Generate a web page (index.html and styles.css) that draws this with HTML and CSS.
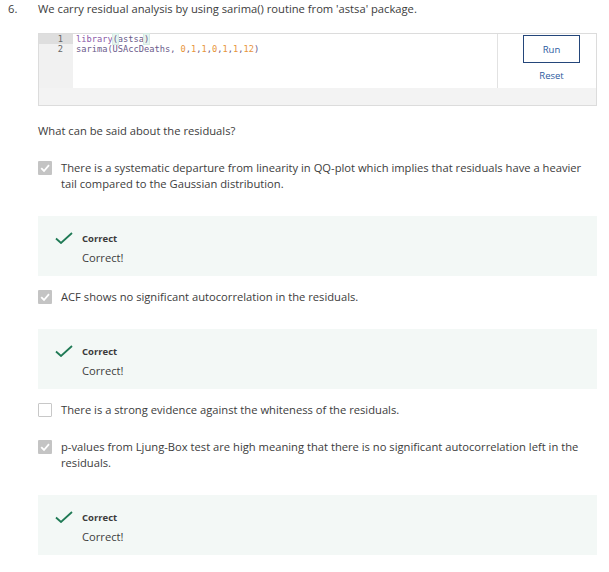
FILE: index.html
```html
<!DOCTYPE html>
<html>
<head>
<meta charset="utf-8">
<link rel="stylesheet" href="styles.css">
</head>
<body>
<div class="question">
  <div class="qnum">6.</div>
  <div class="qtext">We carry residual analysis by using sarima() routine from 'astsa' package.</div>
</div>
<div class="content">
  <div class="editor">
    <div class="editor-main">
      <div class="code">
        <div class="gutter">
          <div class="ln active">1</div>
          <div class="ln">2</div>
        </div>
        <div class="lines">
          <div class="line"><span class="kw">library</span><span class="br">(</span>astsa<span class="br">)</span></div>
          <div class="line">sarima(USAccDeaths, <span class="num">0</span>,<span class="num">1</span>,<span class="num">1</span>,<span class="num">0</span>,<span class="num">1</span>,<span class="num">1</span>,<span class="num">12</span>)</div>
        </div>
      </div>
      <div class="actions">
        <button class="run">Run</button>
        <div class="reset">Reset</div>
      </div>
    </div>
    <div class="editor-foot"></div>
  </div>

  <p class="prompt">What can be said about the residuals?</p>

  <div class="option">
    <span class="cb checked"><svg viewBox="0 0 14 14" width="14" height="14"><path d="M3.2 7.2 L6 10 L11 4.2" fill="none" stroke="#fff" stroke-width="1.8"/></svg></span>
    <div class="otext">There is a systematic departure from linearity in QQ-plot which implies that residuals have a heavier tail compared to the Gaussian distribution.</div>
  </div>
  <div class="feedback">
    <svg class="tick" viewBox="0 0 18 12" width="18" height="12"><path d="M1 6.5 L6 11 L17 1" fill="none" stroke="#1f7a55" stroke-width="1.8"/></svg>
    <div>
      <div class="ftitle">Correct</div>
      <div class="fbody">Correct!</div>
    </div>
  </div>

  <div class="option">
    <span class="cb checked"><svg viewBox="0 0 14 14" width="14" height="14"><path d="M3.2 7.2 L6 10 L11 4.2" fill="none" stroke="#fff" stroke-width="1.8"/></svg></span>
    <div class="otext">ACF shows no significant autocorrelation in the residuals.</div>
  </div>
  <div class="feedback">
    <svg class="tick" viewBox="0 0 18 12" width="18" height="12"><path d="M1 6.5 L6 11 L17 1" fill="none" stroke="#1f7a55" stroke-width="1.8"/></svg>
    <div>
      <div class="ftitle">Correct</div>
      <div class="fbody">Correct!</div>
    </div>
  </div>

  <div class="option">
    <span class="cb"></span>
    <div class="otext">There is a strong evidence against the whiteness of the residuals.</div>
  </div>

  <div class="option">
    <span class="cb checked"><svg viewBox="0 0 14 14" width="14" height="14"><path d="M3.2 7.2 L6 10 L11 4.2" fill="none" stroke="#fff" stroke-width="1.8"/></svg></span>
    <div class="otext">p-values from Ljung-Box test are high meaning that there is no significant autocorrelation left in the residuals.</div>
  </div>
  <div class="feedback">
    <svg class="tick" viewBox="0 0 18 12" width="18" height="12"><path d="M1 6.5 L6 11 L17 1" fill="none" stroke="#1f7a55" stroke-width="1.8"/></svg>
    <div>
      <div class="ftitle">Correct</div>
      <div class="fbody">Correct!</div>
    </div>
  </div>
</div>
</body>
</html>
```
FILE: styles.css
```css
* { box-sizing: border-box; }
body {
  margin: 0;
  font-family: "Open Sans", "Noto Sans", sans-serif;
  font-size: 11.2px;
  color: #3c3c3c;
  background: #fff;
}
.question {
  display: flex;
  padding: 1px 0 0 8px;
  line-height: 16px;
}
.qnum { width: 30px; }
.content {
  margin-left: 38px;
  width: 559px;
}
.editor {
  margin-top: 16px;
  border: 1px solid #dcdcdc;
}
.editor-main {
  display: flex;
  height: 54px;
}
.code {
  flex: 1;
  display: flex;
  font-family: "DejaVu Sans Mono", monospace;
  font-size: 8.7px;
  line-height: 10px;
}
.gutter {
  width: 34px;
  background: #f1f1f1;
  color: #666;
}
.ln {
  text-align: right;
  padding-right: 10px;
  height: 10px;
}
.ln.active { background: #dedede; }
.lines {
  padding-left: 3px;
  color: #6a5a8a;
}
.line { height: 10px; }
.kw { color: #8a5aa8; }
.br { color: #6a5a8a; background: #e6f4ef; outline: 1px solid #d6ece4; }
.num { color: #e8953a; }
.actions {
  width: 99px;
  border-left: 1px solid #e2e2e2;
  display: flex;
  flex-direction: column;
  align-items: flex-start;
  padding: 1px 0 0 25px;
}
.run {
  width: 57px;
  height: 28px;
  border: 1px solid #24467a;
  background: #fff;
  color: #2c5aa0;
  font-family: "Open Sans", sans-serif;
  font-size: 9.5px;
}
.reset {
  width: 57px;
  text-align: center;
  color: #2c5aa0;
  font-size: 9.5px;
  margin-top: 6px;
}
.editor-foot {
  height: 17px;
  background: #f3f3f3;
}
.prompt {
  margin: 17px 0 0;
  line-height: 15px;
}
.option {
  display: flex;
  align-items: flex-start;
  margin-top: 22px;
  line-height: 16px;
}
.cb {
  width: 14px;
  height: 14px;
  flex: none;
  margin-top: 1px;
  margin-right: 9px;
  border: 1px solid #c8c8c8;
  border-radius: 1px;
  background: #fff;
  display: flex;
}
.cb.checked {
  border: none;
  background: #c4c4c4;
}
.otext { flex: 1; }
.feedback {
  display: flex;
  align-items: flex-start;
  margin-top: 24px;
  height: 60px;
  background: #f3f8f6;
  padding: 17px 0 0 17px;
}
.tick { margin-right: 9px; margin-top: -1px; }
.ftitle {
  font-weight: bold;
  font-size: 9.5px;
  line-height: 12px;
}
.fbody {
  margin-top: 6px;
  line-height: 14px;
}
.feedback + .option { margin-top: 13px; }
.option + .option { margin-top: 21px; }
```
